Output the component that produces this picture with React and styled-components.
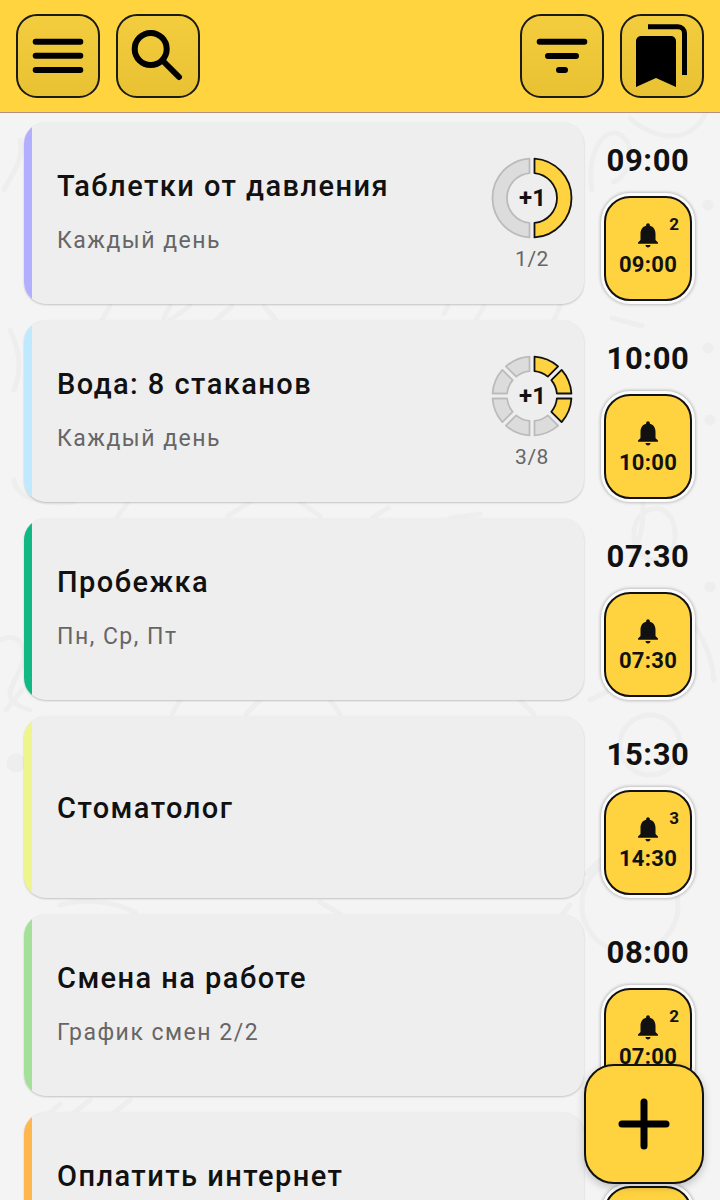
import React from "react";
import styled, { createGlobalStyle } from "styled-components";

const Global = createGlobalStyle`
  html, body { margin: 0; padding: 0; height: 1200px; overflow: hidden; background: #f4f4f4; }
  * { box-sizing: border-box; }
`;

const Page = styled.div`
  position: relative;
  width: 720px;
  height: 1200px;
  overflow: hidden;
  display: flex;
  flex-direction: column;
  background: #f4f4f4;
  font-family: Roboto, "Liberation Sans", sans-serif;
`;
const Wallpaper = styled.svg`
  position: absolute;
  inset: 0;
  pointer-events: none;
`;
const Header = styled.header`
  position: relative;
  flex: 0 0 113px;
  display: flex;
  align-items: flex-start;
  justify-content: space-between;
  padding: 14px 16px 0;
  background: #ffd43f;
  border-bottom: 1px solid #b58f7e;
`;
const ToolGroup = styled.div`
  display: flex;
  gap: 16px;
`;
const ToolButton = styled.button`
  width: 84px;
  height: 84px;
  padding: 0;
  display: flex;
  align-items: center;
  justify-content: center;
  border: 2px solid #1a1a1a;
  border-radius: 21px;
  background: linear-gradient(180deg, #f3cd3d, #e9c233);
`;
const List = styled.main`
  position: relative;
  display: flex;
  flex-direction: column;
  gap: 16px;
  padding: 9px 28px 0 24px;
`;
const Row = styled.div`
  display: flex;
  gap: 20px;
  flex: 0 0 182px;
`;
const Card = styled.article`
  position: relative;
  flex: 0 0 560px;
  height: 182px;
  display: flex;
  align-items: center;
  justify-content: space-between;
  padding: 0 11px 0 33px;
  border-radius: 22px;
  overflow: hidden;
  background: #eeeeee;
  box-shadow: 0 1px 2px rgba(0, 0, 0, 0.2);
  &::before {
    content: "";
    position: absolute;
    left: 0;
    top: 0;
    bottom: 0;
    width: 8px;
    background: ${(p) => p.$accent};
  }
`;
const Copy = styled.div`
  display: flex;
  flex-direction: column;
  gap: 24px;
  padding-bottom: 2px;
`;
const Title = styled.div`
  font-size: 29px;
  line-height: 33px;
  font-weight: 500;
  letter-spacing: 1.45px;
  color: #111;
  &:only-child {
    margin-top: 4px;
  }
`;
const Sub = styled.div`
  font-size: 23px;
  line-height: 27px;
  letter-spacing: 1.5px;
  color: #666;
`;
const Meter = styled.div`
  display: flex;
  flex-direction: column;
  align-items: center;
  gap: 7px;
  width: 82px;
  margin-top: 3px;
`;
const RingBox = styled.div`
  position: relative;
  width: 82px;
  height: 82px;
`;
const RingLabel = styled.span`
  position: absolute;
  inset: 0;
  display: flex;
  align-items: center;
  justify-content: center;
  padding-left: 1px;
  font-size: 24px;
  font-weight: 700;
  color: #111;
`;
const Count = styled.div`
  font-size: 21px;
  line-height: 26px;
  letter-spacing: 0.5px;
  color: #666;
`;
const TimeCol = styled.div`
  display: flex;
  flex-direction: column;
  align-items: center;
  gap: 17px;
  width: 88px;
  padding-top: 21px;
`;
const Time = styled.div`
  font-size: 31px;
  line-height: 36px;
  font-weight: 700;
  letter-spacing: 0.6px;
  color: #111;
  white-space: nowrap;
`;
const Alarm = styled.div`
  position: relative;
  width: 88px;
  height: 105px;
  flex: none;
  display: flex;
  flex-direction: column;
  align-items: center;
  gap: 2px;
  padding-top: 22px;
  border: 2px solid #111;
  border-radius: 26px;
  background: #ffd33f;
  box-shadow: 0 0 0 3px #fbfbfb, 0 0 3px 4px rgba(0, 0, 0, 0.22);
`;
const AlarmTime = styled.div`
  font-size: 22px;
  line-height: 26px;
  font-weight: 700;
  letter-spacing: 0.3px;
  color: #111;
`;
const Badge = styled.span`
  position: absolute;
  top: 17px;
  right: 11px;
  font-size: 17px;
  line-height: 18px;
  font-weight: 700;
  color: #111;
`;
const Fab = styled.button`
  position: absolute;
  left: 584px;
  top: 1064px;
  width: 120px;
  height: 120px;
  padding: 0;
  display: flex;
  align-items: center;
  justify-content: center;
  border: 2px solid #111;
  border-radius: 30px;
  background: #ffd33f;
  box-shadow: 0 3px 8px rgba(0, 0, 0, 0.22);
`;

const polar = (r, deg) => {
  const a = ((deg - 90) * Math.PI) / 180;
  return [41 + r * Math.cos(a), 41 + r * Math.sin(a)];
};
const segment = (start, end, R, r, gap) => {
  const outerGap = (gap / (2 * R)) * (180 / Math.PI);
  const innerGap = (gap / (2 * r)) * (180 / Math.PI);
  const [x1, y1] = polar(R, start + outerGap);
  const [x2, y2] = polar(R, end - outerGap);
  const [x3, y3] = polar(r, end - innerGap);
  const [x4, y4] = polar(r, start + innerGap);
  const large = end - start > 180 ? 1 : 0;
  return `M${x1} ${y1}A${R} ${R} 0 ${large} 1 ${x2} ${y2}L${x3} ${y3}A${r} ${r} 0 ${large} 0 ${x4} ${y4}Z`;
};

const Ring = ({ done, total }) => (
  <Meter>
    <RingBox>
      <svg width="82" height="82" viewBox="0 0 82 82">
        {Array.from({ length: total }, (_, i) => {
          const step = 360 / total;
          const on = i < done;
          return (
            <path
              key={i}
              d={segment(i * step, (i + 1) * step, 39.5, 25, 5)}
              fill={on ? "#ffd33f" : "#dcdcdc"}
              stroke={on ? "#111" : "#bbbbbb"}
              strokeWidth="1.8"
              strokeLinejoin="round"
            />
          );
        })}
      </svg>
      <RingLabel>+1</RingLabel>
    </RingBox>
    <Count>{done}/{total}</Count>
  </Meter>
);

const Bell = () => (
  <svg width="30" height="30" viewBox="0 0 24 24" fill="#111">
    <path d="M12 22c1.1 0 2-.9 2-2h-4c0 1.1.89 2 2 2zm6-6v-5c0-3.07-1.64-5.64-4.5-6.32V4c0-.83-.67-1.5-1.5-1.5s-1.5.67-1.5 1.5v.68C7.63 5.36 6 7.92 6 11v5l-2 2v1h16v-1l-2-2z" />
  </svg>
);

const Glyph = ({ children }) => (
  <svg width="72" height="72" viewBox="0 0 72 72" fill="none" stroke="#000" strokeWidth="6" strokeLinecap="round" strokeLinejoin="round">
    {children}
  </svg>
);

const items = [
  { accent: "#b3afff", title: "Таблетки от давления", sub: "Каждый день", time: "09:00", alarm: "09:00", badge: 2, ring: [1, 2] },
  { accent: "#bfe9ff", title: "Вода: 8 стаканов", sub: "Каждый день", time: "10:00", alarm: "10:00", ring: [3, 8] },
  { accent: "#10b981", title: "Пробежка", sub: "Пн, Ср, Пт", time: "07:30", alarm: "07:30" },
  { accent: "#eef58d", title: "Стоматолог", time: "15:30", alarm: "14:30", badge: 3 },
  { accent: "#a5e09b", title: "Смена на работе", sub: "График смен 2/2", time: "08:00", alarm: "07:00", badge: 2 },
  { accent: "#ffb74d", title: "Оплатить интернет", sub: "Каждый месяц", time: "10:00", alarm: "10:00" },
];

export default function App() {
  return (
    <Page>
      <Global />
      <Wallpaper width="720" height="1200" viewBox="0 0 720 1200" fill="none" stroke="#eeeeee" strokeWidth="5" strokeLinecap="round">
        <path d="M592 190c-6-40 14-66 30-54s6 40-8 46M630 118c20 20 60 30 76-6M612 318l30 8" />
        <path d="M636 470c10 30 10 60-4 86M655 560c-24 0-30-40-6-50s36 30 16 50M690 620c16 20 22 40 24 60M590 700l20-10" />
        <circle cx="650" cy="745" r="30" />
        <circle cx="630" cy="905" r="48" />
        <path d="M640 880c10-8 24-6 32 2M600 860l-14 14" />
        <path d="M110 306l-8 14M170 306l-6 12M190 306l-20 14M232 306l-16 14M264 306l12 14M448 306l-4 8M484 306l-8 14M560 306l-6 14" />
        <path d="M14 480c2 18 30 26 60 22M128 502l-10 14M250 502l-22 14M300 502l20 14M388 508l-16 10M480 514l-30 4" />
        <path d="M180 700l-8 14M260 700l-14 14M330 700l10 14M520 700l14 14M60 905c20-6 50-6 76 8M320 902l20 12M570 905l-10 12" />
        <path d="M0 640c20-10 30 10 20 30s-20 30 10 40M22 690l-16 20M10 330c10 20 12 40 4 60M4 190c10-20 20-30 16-50" />
        <path d="M60 1104l-14 12M90 1100l-20 16M130 1100l-20 16" />
        <circle cx="16" cy="763" r="7" fill="#eeeeee" />
        <circle cx="708" cy="205" r="3" fill="#eeeeee" />
        <circle cx="708" cy="348" r="3" fill="#eeeeee" />
        <circle cx="710" cy="420" r="3" fill="#eeeeee" />
        <circle cx="710" cy="587" r="3" fill="#eeeeee" />
      </Wallpaper>
      <Header>
        <ToolGroup>
          <ToolButton aria-label="Меню">
            <Glyph>
              <path d="M13.7 21.7h44.6M13.7 35.7h44.6M13.7 50h44.6" />
            </Glyph>
          </ToolButton>
          <ToolButton aria-label="Поиск">
            <Glyph>
              <circle cx="28.7" cy="29" r="16" />
              <path d="M41 41l16 16" />
            </Glyph>
          </ToolButton>
        </ToolGroup>
        <ToolGroup>
          <ToolButton aria-label="Фильтр">
            <Glyph>
              <path d="M13.7 21.7h44.6M22 36h28M33 50h6" />
            </Glyph>
          </ToolButton>
          <ToolButton aria-label="Закладки">
            <svg width="72" height="72" viewBox="0 0 72 72">
              <path d="M22 6.8h30a6.5 6.5 0 0 1 6.5 6.5V55" fill="none" stroke="#000" strokeWidth="5" />
              <path d="M10 21a5 5 0 0 1 5-5h30a5 5 0 0 1 5 5v46l-20-9-20 9z" fill="#000" />
            </svg>
          </ToolButton>
        </ToolGroup>
      </Header>
      <List>
        {items.map((it) => (
          <Row key={it.title}>
            <Card $accent={it.accent}>
              <Copy>
                <Title>{it.title}</Title>
                {it.sub && <Sub>{it.sub}</Sub>}
              </Copy>
              {it.ring && <Ring done={it.ring[0]} total={it.ring[1]} />}
            </Card>
            <TimeCol>
              <Time>{it.time}</Time>
              <Alarm>
                <Bell />
                <AlarmTime>{it.alarm}</AlarmTime>
                {it.badge && <Badge>{it.badge}</Badge>}
              </Alarm>
            </TimeCol>
          </Row>
        ))}
      </List>
      <Fab aria-label="Добавить">
        <svg width="72" height="72" viewBox="0 0 72 72" fill="none" stroke="#000" strokeWidth="7" strokeLinecap="round">
          <path d="M14 36h44M36 14v44" />
        </svg>
      </Fab>
    </Page>
  );
}
